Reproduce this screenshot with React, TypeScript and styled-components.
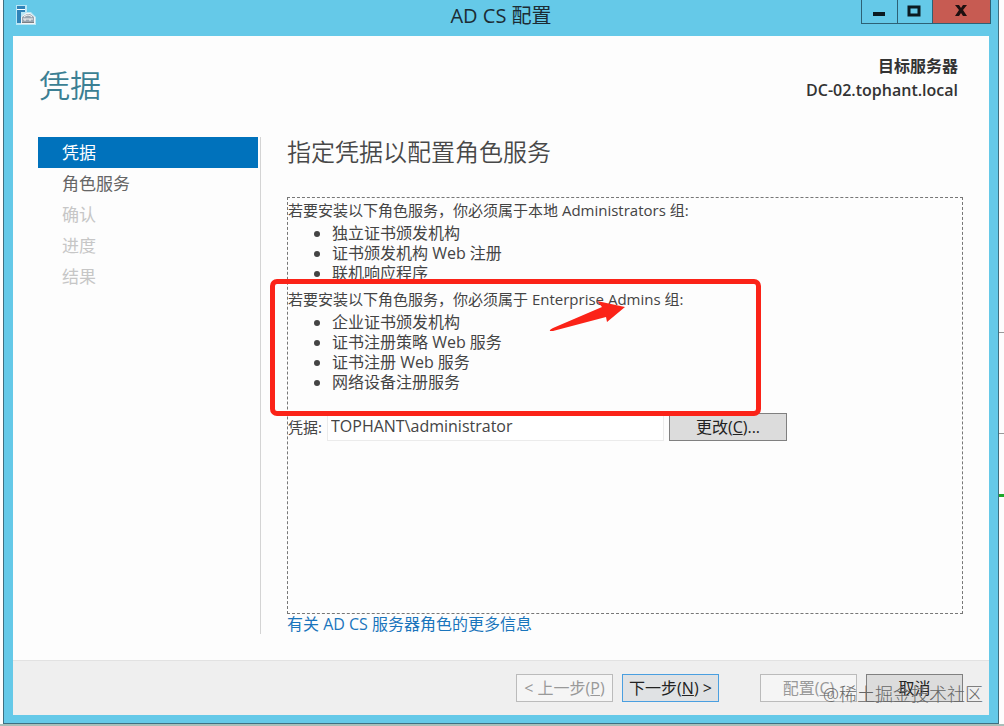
import React from "react";
import styled, { createGlobalStyle, css } from "styled-components";

const GlobalStyle = createGlobalStyle`
  * { box-sizing: border-box; }
  body {
    margin: 0;
    background: #fdfdfd;
    color: #444;
    font-family: "Open Sans", "Noto Sans CJK SC", sans-serif;
    font-size: 16px;
    line-height: 20px;
  }
  button, input { font: inherit; color: inherit; }
`;

const Desktop = styled.div`
  position: relative;
  display: flex;
  min-height: 100vh;
  padding: 0 5px 2px 3px;
  background: linear-gradient(to top, #a9bfb9 2px, transparent 2px);
`;

const BackgroundLine = styled.span<{ $top: number; $green?: boolean }>`
  position: absolute;
  right: 0;
  top: ${(p) => p.$top}px;
  width: 5px;
  height: ${(p) => (p.$green ? 3 : 1)}px;
  background: ${(p) => (p.$green ? "#1ea82a" : "#999")};
`;

const Window = styled.div`
  position: relative;
  flex: 1;
  display: flex;
  flex-direction: column;
  padding: 0 9px 8px;
  border: solid #3f6f80;
  border-width: 0 1px 1px;
  background: #65c9e8;
`;

const TitleBar = styled.header`
  display: grid;
  grid-template-columns: 1fr auto 1fr;
  align-items: start;
  height: 36px;
`;

const AppIcon = styled.svg`
  width: 22px;
  height: 22px;
  margin: 5px 0 0 2px;
`;

const WindowTitle = styled.h1`
  margin: 0;
  color: #1c2c34;
  font-size: 20px;
  font-weight: 400;
  line-height: 32px;
`;

const WindowControls = styled.div`
  display: flex;
  justify-self: end;
  margin-right: -2px;
  border: solid #2d6175;
  border-width: 0 1px 1px;
`;

const ControlButton = styled.button<{ $close?: boolean }>`
  display: flex;
  align-items: center;
  justify-content: center;
  width: ${(p) => (p.$close ? 58 : 35)}px;
  height: 23px;
  padding: 0 2px 2px 0;
  border: 0;
  background: ${(p) => (p.$close ? "#c75b52" : "transparent")};
  & + & { border-left: 1px solid #2d6175; }
`;

const Body = styled.div`
  flex: 1;
  display: flex;
  flex-direction: column;
  background: #fdfdfd;
`;

const PageHeader = styled.div`
  display: flex;
  justify-content: space-between;
  height: 101px;
  padding: 18px 31px 0 26px;
`;

const PageName = styled.h2`
  margin: 0;
  color: #3b7f93;
  font-size: 31px;
  font-weight: 350;
  line-height: 62px;
`;

const Target = styled.div`
  color: #333;
  font-weight: 600;
  line-height: 24px;
  text-align: right;
`;

const Main = styled.div`
  flex: 1;
  display: flex;
  padding: 0 26px 26px 25px;
`;

const Steps = styled.nav`
  flex: none;
  width: 223px;
  padding-right: 2px;
  border-right: 1px solid #d4d4d4;
`;

type StepState = "current" | "open" | "disabled";

const stepColours = {
  current: css`background: #0072bc; color: #fff;`,
  open: css`color: #666;`,
  disabled: css`color: #c6c6c6;`,
};

const Step = styled.a<{ $state: StepState }>`
  display: block;
  padding-left: 24px;
  font-size: 17px;
  line-height: 31px;
  text-decoration: none;
  ${(p) => stepColours[p.$state]}
`;

const Content = styled.main`
  flex: 1;
  display: flex;
  flex-direction: column;
  align-items: stretch;
  padding-left: 26px;
`;

const Heading = styled.h3`
  margin: 0 0 30px;
  color: #484848;
  font-size: 24px;
  font-weight: 350;
  line-height: 30px;
`;

const Panel = styled.div`
  flex: 1;
  border: 1px dashed #777;
  padding-top: 2px;
`;

const RoleGroup = styled.section`
  position: relative;
  height: 89px;
  & + & { height: 124px; }
`;

const Intro = styled.p`
  margin: 0 0 2px;
  font-size: 15px;
  line-height: 21px;
`;

const RoleList = styled.ul`
  margin: 0;
  padding-left: 44px;
`;

const Highlight = styled.div`
  position: absolute;
  top: -10px;
  left: -18px;
  width: 491px;
  height: 137px;
  border: 5px solid #fb2318;
  border-radius: 7px;
  pointer-events: none;
`;

const Arrow = styled.svg`
  position: absolute;
  top: 8px;
  left: 257px;
  width: 90px;
  height: 40px;
`;

const CredentialRow = styled.div`
  display: flex;
  align-items: center;
`;

const CredentialLabel = styled.label`
  width: 34px;
  font-size: 15px;
`;

const CredentialInput = styled.input`
  width: 337px;
  height: 27px;
  margin: 0 5px;
  padding: 0 3px 2px;
  border: 1px solid #ebebeb;
  background: #fff;
`;

const Button = styled.button<{ $kind?: "primary" | "wide" }>`
  width: ${(p) => (p.$kind === "wide" ? 118 : 97)}px;
  height: 28px;
  padding: 0;
  border: 1px solid ${(p) => (p.$kind === "primary" ? "#4a9fe0" : "#808080")};
  background: ${(p) => (p.$kind === "primary" ? "#e0e2e4" : "#dcdcdc")};
  color: #222;
  white-space: nowrap;
  &:disabled {
    border-color: #bbb;
    background: #f5f5f5;
    color: #999;
  }
`;

const MoreLink = styled.a`
  align-self: flex-start;
  height: 20px;
  color: #1a75bc;
  text-decoration: none;
`;

const Footer = styled.footer`
  display: flex;
  justify-content: flex-end;
  gap: 41px;
  padding: 13px 26px 13px;
  border-top: 1px solid #e2e2e2;
  background: #efefef;
`;

const ButtonPair = styled.div`
  display: flex;
  gap: 9px;
`;

const Watermark = styled.span`
  position: absolute;
  right: 15px;
  bottom: 16px;
  color: #666;
  font-size: 18px;
  font-weight: 300;
  line-height: 26px;
  pointer-events: none;
`;

const steps: { label: string; state: StepState }[] = [
  { label: "凭据", state: "current" },
  { label: "角色服务", state: "open" },
  { label: "确认", state: "disabled" },
  { label: "进度", state: "disabled" },
  { label: "结果", state: "disabled" },
];

const localRoles = ["独立证书颁发机构", "证书颁发机构 Web 注册", "联机响应程序"];
const enterpriseRoles = ["企业证书颁发机构", "证书注册策略 Web 服务", "证书注册 Web 服务", "网络设备注册服务"];

const Roles = ({ items }: { items: string[] }) => (
  <RoleList>
    {items.map((item) => <li key={item}>{item}</li>)}
  </RoleList>
);

export default function App() {
  return (
    <Desktop lang="zh-CN">
      <GlobalStyle />
      <BackgroundLine $top={332} />
      <BackgroundLine $top={433} />
      <BackgroundLine $top={494} $green />
      <Window>
        <TitleBar>
          <AppIcon viewBox="0 0 22 22" aria-hidden="true">
            <path d="M1 0h11v7l4 0 5 5v8H1z" fill="#b9e6f5" />
            <path d="M2 1h8v3H2zM2 5h8v2H6v11H2z" fill="#2f83b8" />
            <path d="M2 4h8v1H2z" fill="#fff" />
            <path d="M6 12l5-4h4l5 4v7H6z" fill="#f3f5f6" />
            <path d="M7 12l5-3h3l4 3v5H7z" fill="#9aa6b1" />
            <path d="M9 12q4-4 8 0M8 14h10M10 14v2M15 14v2" fill="none" stroke="#f5f5f5" />
            <path d="M7 17h12v1H7z" fill="#7b7f83" />
          </AppIcon>
          <WindowTitle>AD CS 配置</WindowTitle>
          <WindowControls>
            <ControlButton aria-label="最小化">
              <svg width="14" height="14"><path d="M1 8h12v4H1z" fill="#0b1a20" /></svg>
            </ControlButton>
            <ControlButton aria-label="最大化">
              <svg width="14" height="12"><path d="M2 2h10v8H2z" fill="none" stroke="#0b1a20" strokeWidth="3" /></svg>
            </ControlButton>
            <ControlButton $close aria-label="关闭">
              <svg width="12" height="12"><path d="M0 0h4l2 3 2-3h4L8 5l4 6H8L6 8l-2 3H0l4-6z" fill="#1e1010" /></svg>
            </ControlButton>
          </WindowControls>
        </TitleBar>
        <Body>
          <PageHeader>
            <PageName>凭据</PageName>
            <Target>
              <div>目标服务器</div>
              <div>DC-02.tophant.local</div>
            </Target>
          </PageHeader>
          <Main>
            <Steps>
              {steps.map((s) => (
                <Step key={s.label} $state={s.state} href={s.state === "disabled" ? undefined : "#"}>
                  {s.label}
                </Step>
              ))}
            </Steps>
            <Content>
              <Heading>指定凭据以配置角色服务</Heading>
              <Panel>
                <RoleGroup>
                  <Intro>若要安装以下角色服务，你必须属于本地 Administrators 组:</Intro>
                  <Roles items={localRoles} />
                </RoleGroup>
                <RoleGroup>
                  <Intro>若要安装以下角色服务，你必须属于 Enterprise Admins 组:</Intro>
                  <Roles items={enterpriseRoles} />
                  <Highlight />
                  <Arrow viewBox="0 0 90 40" aria-hidden="true">
                    <path d="M5 34Q4 33 8 31L57 10L52 4L80 10L62 25L61 20L8 34Z" fill="#fb2318" />
                  </Arrow>
                </RoleGroup>
                <CredentialRow>
                  <CredentialLabel htmlFor="credential">凭据:</CredentialLabel>
                  <CredentialInput id="credential" defaultValue="TOPHANT\administrator" />
                  <Button $kind="wide">更改(<u>C</u>)...</Button>
                </CredentialRow>
              </Panel>
              <MoreLink href="#">有关 AD CS 服务器角色的更多信息</MoreLink>
            </Content>
          </Main>
          <Footer>
            <ButtonPair>
              <Button disabled>&lt; 上一步(<u>P</u>)</Button>
              <Button $kind="primary">下一步(<u>N</u>) &gt;</Button>
            </ButtonPair>
            <ButtonPair>
              <Button disabled>配置(<u>C</u>)</Button>
              <Button>取消</Button>
            </ButtonPair>
          </Footer>
        </Body>
        <Watermark>@稀土掘金技术社区</Watermark>
      </Window>
    </Desktop>
  );
}
